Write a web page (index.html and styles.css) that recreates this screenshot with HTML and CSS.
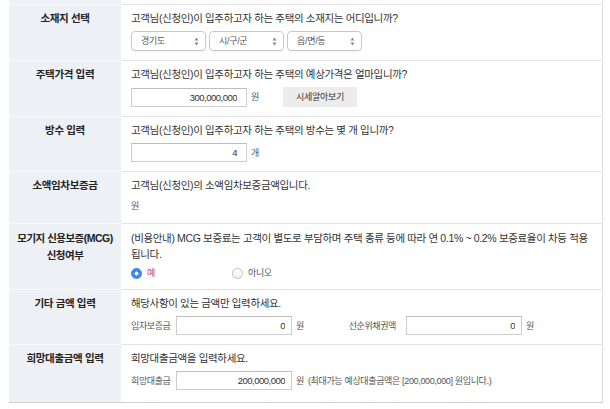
FILE: index.html
```html
<!DOCTYPE html>
<html lang="ko">
<head>
<meta charset="utf-8">
<title>대출 신청 정보 입력</title>
<link rel="stylesheet" href="styles.css">
</head>
<body>
<div class="wrap">
<table class="form-table">
    <colgroup><col class="col-label"><col></colgroup>
    <tr class="cut"><th></th><td></td></tr>
    <tr>
        <th>소재지 선택</th>
        <td>
            <p class="q">고객님(신청인)이 입주하고자 하는 주택의 소재지는 어디입니까?</p>
            <div class="line">
                <div class="select"><select><option>경기도</option></select><svg class="arrows" width="5" height="9" viewBox="0 0 5 9"><path d="M2.5 0.5 L4.5 3.5 H0.5 Z M2.5 8.5 L4.5 5.5 H0.5 Z" fill="#8a8a8a"/></svg></div>
                <div class="select"><select><option>시/구/군</option></select><svg class="arrows" width="5" height="9" viewBox="0 0 5 9"><path d="M2.5 0.5 L4.5 3.5 H0.5 Z M2.5 8.5 L4.5 5.5 H0.5 Z" fill="#8a8a8a"/></svg></div>
                <div class="select"><select><option>읍/면/동</option></select><svg class="arrows" width="5" height="9" viewBox="0 0 5 9"><path d="M2.5 0.5 L4.5 3.5 H0.5 Z M2.5 8.5 L4.5 5.5 H0.5 Z" fill="#8a8a8a"/></svg></div>
            </div>
        </td>
    </tr>
    <tr>
        <th>주택가격 입력</th>
        <td>
            <p class="q">고객님(신청인)이 입주하고자 하는 주택의 예상가격은 얼마입니까?</p>
            <div class="line">
                <input class="num" type="text" value="300,000,000">
                <span class="unit">원</span>
                <button class="btn" type="button">시세알아보기</button>
            </div>
        </td>
    </tr>
    <tr>
        <th>방수 입력</th>
        <td>
            <p class="q">고객님(신청인)이 입주하고자 하는 주택의 방수는 몇 개 입니까?</p>
            <div class="line">
                <input class="num" type="text" value="4">
                <span class="unit">개</span>
            </div>
        </td>
    </tr>
    <tr class="row-deposit">
        <th>소액임차보증금</th>
        <td>
            <p class="q">고객님(신청인)의 소액임차보증금액입니다.</p>
            <p class="small">원</p>
        </td>
    </tr>
    <tr class="row-mcg">
        <th>모기지 신용보증(MCG)<br>신청여부</th>
        <td>
            <p class="q">(비용안내) MCG 보증료는 고객이 별도로 부담하며 주택 종류 등에 따라 연 0.1% ~ 0.2% 보증료율이 차등 적용<br>됩니다.</p>
            <div class="radios">
                <label class="radio on"><span class="dot"></span><span class="yes">예</span></label>
                <label class="radio"><span class="dot"></span>아니오</label>
            </div>
        </td>
    </tr>
    <tr>
        <th>기타 금액 입력</th>
        <td>
            <p class="q">해당사항이 있는 금액만 입력하세요.</p>
            <div class="line">
                <span class="field-label">임차보증금</span>
                <input class="num wide" type="text" value="0">
                <span class="unit">원</span>
                <span class="field-label right">선순위채권액</span>
                <input class="num wide" type="text" value="0">
                <span class="unit">원</span>
            </div>
        </td>
    </tr>
    <tr class="last">
        <th>희망대출금액 입력</th>
        <td>
            <p class="q">희망대출금액을 입력하세요.</p>
            <div class="line">
                <span class="field-label">희망대출금</span>
                <input class="num wide" type="text" value="200,000,000">
                <span class="unit">원</span>
                <span class="note">(최대가능 예상대출금액은 [200,000,000] 원입니다.)</span>
            </div>
        </td>
    </tr>
</table>
</div>
</body>
</html>
```

FILE: styles.css
```css
body{
    margin: 0;
    background: #fff;
    color: #333;
    font-family: "Liberation Sans", "Noto Sans CJK KR", sans-serif;
    font-size: 10.5px;
    letter-spacing: -0.35px;
}

.wrap{
    padding-left: 9px;
}

.form-table{
    width: 594px;
    table-layout: fixed;
    border-collapse: collapse;
    border-right: 1px solid #dedede;
}
.col-label{
    width: 112px;
}
.form-table th{
    background: #edf0f5;
    color: #222;
    font-weight: bold;
    text-align: center;
    vertical-align: top;
    line-height: 14px;
    padding: 6px 2px 9px;
    border-bottom: 1px solid #f7f8fa;
}
.form-table td{
    vertical-align: top;
    line-height: 14px;
    padding: 6px 10px 9px;
    border-bottom: 1px solid #e2e2e2;
}
.form-table tr.cut th,
.form-table tr.cut td{
    height: 4px;
    padding: 0;
}
.form-table tr.cut td{
    border-bottom-color: #e2e2e2;
}
.form-table tr.last th,
.form-table tr.last td{
    padding-bottom: 12px;
    border-bottom: 1px solid #d0d0d0;
}

.q{
    margin: 0 0 6px;
}
.small{
    margin: 7px 0 0;
    font-size: 9px;
    color: #555;
}
.row-deposit td{
    padding-bottom: 10px;
}

.row-mcg th{
    line-height: 17px;
    letter-spacing: -0.5px;
}
.row-mcg .q{
    line-height: 16px;
    margin-bottom: 4px;
    word-break: keep-all;
}

.line{
    display: flex;
    align-items: center;
}

.select{
    position: relative;
    margin-right: 3px;
}
.select select{
    appearance: none;
    -webkit-appearance: none;
    width: 75px;
    height: 20px;
    padding: 0 0 0 9px;
    border: 1px solid #c9c9c9;
    border-radius: 4px;
    background: #fff;
    color: #555;
    font: inherit;
    font-size: 9px;
    letter-spacing: -0.3px;
    box-shadow: 0 1px 1px rgba(0,0,0,0.05);
}
.select .arrows{
    position: absolute;
    right: 7px;
    top: 6px;
}

.num{
    width: 116px;
    height: 19px;
    box-sizing: border-box;
    border: 1px solid #cdcdcd;
    border-top-color: #bdbdbd;
    padding: 0 9px 0 4px;
    text-align: right;
    color: #333;
    font: inherit;
    font-size: 9.5px;
    letter-spacing: -0.5px;
    outline: none;
}
.num.wide{
    padding-right: 6px;
}
.unit{
    margin-left: 4px;
    font-size: 9px;
    color: #555;
}
.btn{
    margin-left: 24px;
    width: 74px;
    height: 20px;
    border: none;
    background: #ececec;
    color: #333;
    font: inherit;
    font-size: 9px;
    letter-spacing: -0.3px;
}

.radios{
    display: flex;
    align-items: center;
    height: 14px;
}
.radio{
    display: flex;
    align-items: center;
    width: 101px;
    font-size: 9px;
    color: #555;
}
.radio .dot{
    width: 9px;
    height: 9px;
    margin-right: 5px;
    border: 1px solid #c4c4c4;
    border-radius: 50%;
    background: linear-gradient(#fff, #f0f0f0);
    box-sizing: content-box;
}
.radio.on .dot{
    border-color: #3a86e0;
    background: radial-gradient(circle, #fff 0 1.8px, #3d8de6 2.2px);
}
.yes{
    color: #c8424a;
}

.field-label{
    width: 45px;
    font-size: 9px;
    letter-spacing: -0.4px;
    color: #555;
}
.field-label.right{
    width: 92px;
    margin-right: 10px;
    text-align: right;
}
.note{
    margin-left: 4px;
    font-size: 9px;
    color: #555;
}
```
